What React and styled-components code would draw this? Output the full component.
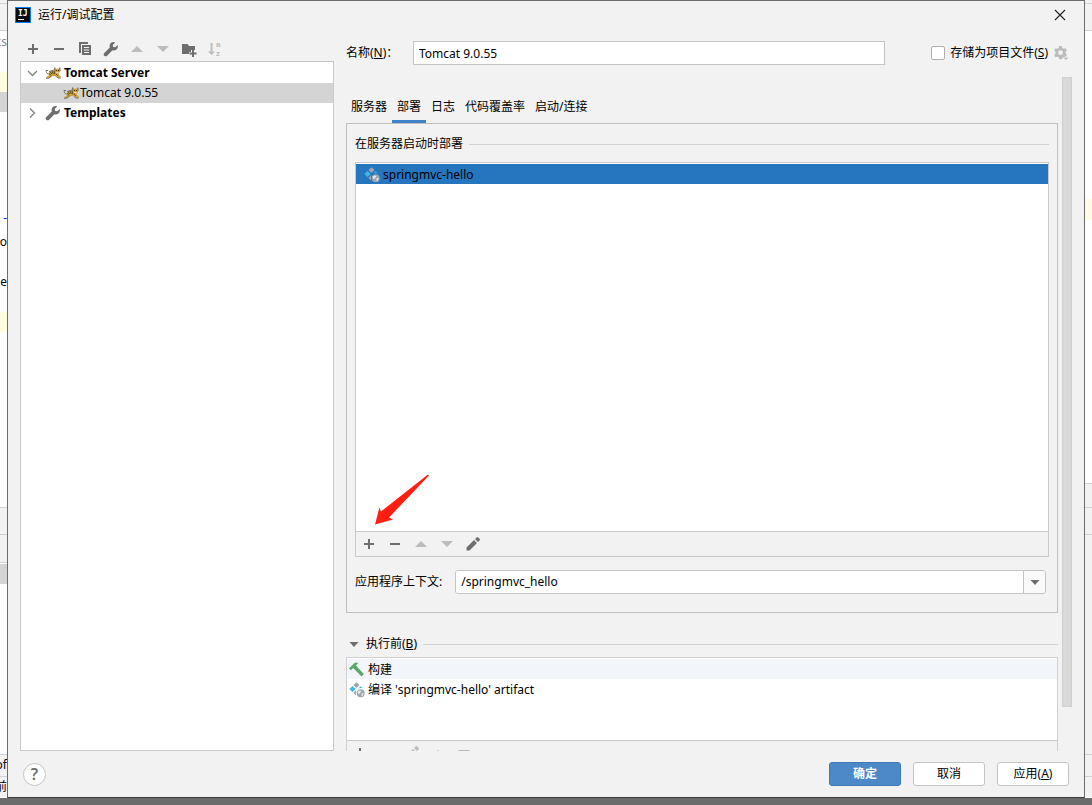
import React, { useId, useState } from 'react';
import styled, { createGlobalStyle, css } from 'styled-components';

const GlobalStyle = createGlobalStyle`
  * {
    box-sizing: border-box;
  }
  body {
    margin: 0;
    background: #6b6b6b;
    color: #000;
    font-family: 'Noto Sans', 'Noto Sans CJK SC', sans-serif;
    font-size: 12px;
    line-height: 20px;
  }
  button,
  input {
    font: inherit;
    color: inherit;
  }
  button {
    padding: 0;
    border: 0;
    background: none;
  }
`;

/* ---------- icons ---------- */

const Icon = ({ children, size = 16, color = '#6e6e6e' }) => (
  <svg width={size} height={size} viewBox="0 0 16 16" fill={color} aria-hidden="true">
    {children}
  </svg>
);

const PlusIcon = () => (
  <Icon>
    <path d="M7 3h2v4h4v2H9v4H7V9H3V7h4z" />
  </Icon>
);

const MinusIcon = () => (
  <Icon>
    <path d="M3 7h10v2H3z" />
  </Icon>
);

const CopyIcon = () => (
  <Icon>
    <path d="M2 1h9v2H4v9H2z" />
    <path fillRule="evenodd" d="M5 4h9v10H5zM7 6v1h5V6zM7 8.500v1h5v-1zM7 11v1h5v-1z" />
  </Icon>
);

const WrenchIcon = () => (
  <Icon>
    <path d="M14.700 4l-2.500 2.300-2-.4-.5-2L12.100 1.400C10 .6 7.800 1.500 7 3.300c-.5 1.200-.5 2.200-.2 3.200L1.300 12c-.8.8-.8 2 0 2.800.8.7 2 .7 2.800 0l5.400-5.500c1.300.5 2.900.2 4-.9 1.200-1.100 1.700-2.900 1.200-4.400z" />
  </Icon>
);

const UpIcon = () => (
  <Icon color="#bcbcbc">
    <path d="M2 11l6-6 6 6z" />
  </Icon>
);

const DownIcon = () => (
  <Icon color="#bcbcbc">
    <path d="M2 5h12l-6 6z" />
  </Icon>
);

const FolderPlusIcon = () => (
  <Icon>
    <path d="M1 3h5.500l1.500 2h6v4h-4v2H8v2H1z" />
    <path d="M11 9h2v2.500h2.500v2H13V16h-2v-2.500H8.500v-2H11z" />
  </Icon>
);

const SortIcon = () => (
  <Icon color="#bcbcbc">
    <path d="M3.500 2h2v8.500H8L4.500 14 1 10.500h2.500z" />
    <g fontFamily="Liberation Sans" fontSize="8" fontWeight="700">
      <text x="9" y="6">a</text>
      <text x="9" y="15">z</text>
    </g>
  </Icon>
);

const PencilIcon = ({ color }) => (
  <Icon color={color}>
    <path d="M1.500 14.500v-3L9 4l3 3-7.500 7.500zM10 3l1.600-1.600q.8-.8 1.600 0l1.400 1.400q.8.8 0 1.600L13 6z" />
  </Icon>
);

const ChevronIcon = ({ open }) => (
  <Icon>
    <path
      d={open ? 'M4 6l4.500 4.500L13 6' : 'M6 3.500L10.500 8 6 12.500'}
      fill="none"
      stroke="#808080"
      strokeWidth="1.300"
    />
  </Icon>
);

const TomcatIcon = () => (
  <Icon>
    <path d="M3.500 8q1.500-2.500 6-2.500l.2-3.200 1.600 1.400h2L15 2.300l.3 4.200-1.800 2 .5 1.500 1.800 1.500v1.300h-2.600l-2-2-3.200.2-2.200 1.300L3.500 13H1.200l.3-1.300 2.200-1z" fill="#cf9f35" />
    <path d="M10.500 7h3.500l-1.500 1.500z" fill="#f4e3b0" />
    <path d="M5 6.500L6.800 9M7 6l1.400 3M9 6l.8 3.200M11 9l1.800 1.500M4.500 8.500l1.200 2" stroke="#5c4a22" strokeWidth="1" />
    <path d="M3.500 9Q2 9 1.500 7.500T1 5.500H3M1 13.300h2.800l2.500-2.300M10.500 11l2.700 2.100h2.400M9.600 2.500v3.200M15 2.500v3.400M4 6.500L9 5" fill="none" stroke="#5e5b52" strokeWidth=".8" />
    <path d="M10.800 5h1.100v1.100h-1.100zM13 5h1.100v1.100H13z" fill="#3f3320" />
  </Icon>
);

const ArtifactIcon = () => (
  <Icon>
    <path d="M7.500.2l3 2.900-3 2.900-3-2.900z" fill="#9aa7b0" />
    <path d="M3.500 4l3.200 3-3.200 3L.4 7z" fill="#40b6e0" />
    <path d="M11.500 4.300l2.200 1.900q-3.400-.4-5.200 1.200z" fill="#40b6e0" />
    <path d="M7 8.300l.4.400q-1 2.200-.4 4.800l-2.700-2.600z" fill="#9aa7b0" />
    <circle cx="11.700" cy="11.300" r="4" fill="#9aa7b0" />
    <path d="M8.700 9.600l1.800-1.200 1.300.3.3 1.200-1.400.9-.2 1.500-1.600-1.100zM12.600 11.300l2-.3-.6 2.300-1.400 1z" fill="#e8edf1" />
  </Icon>
);

const HammerIcon = () => (
  <Icon>
    <path d="M0 6.500L5.200 1.200q2-1.200 4-.2L7 3.200l.8 1.300 7 7.500-2.300 2.400-7.300-7.500-1.200-.8L2 8.300z" fill="#59a869" />
  </Icon>
);

const GearIcon = () => (
  <Icon color="#bcbcbc">
    <path
      fillRule="evenodd"
      d="M6.200 1h2.600l.5 2 1.300.8 2-.6 1.300 2.200L12.500 7v1.200l1.400 1.500-1.200 2h-1.500l-1.600.7-.6 1.900H6.300l-.6-2-1.300-.7-2 .6-1.300-2.200 1.500-1.500V7L1.100 5.400l1.300-2.200 2 .6L5.700 3zM7.500 5.300a2.400 2.400 0 1 0 .01 4.800a2.400 2.400 0 1 0 0-4.800z"
    />
    <path d="M10 12.500h5.500L12.800 15z" />
  </Icon>
);

const IdeaLogo = () => (
  <Icon color="#fff">
    <path fill="#087cfa" d="M0 0h16v16H0z" />
    <path fill="#0b0b12" d="M1 1h14v14H1z" />
    <text x="3" y="9" fontSize="8" fontWeight="700" fontFamily="DejaVu Sans Mono">IJ</text>
    <path d="M3 12h6v1H3z" />
  </Icon>
);

const CaretIcon = () => (
  <Icon>
    <path d="M3.500 6h9L8 11z" />
  </Icon>
);

const CloseIcon = () => (
  <Icon>
    <path d="M3 3l10 10M13 3L3 13" stroke="#222" strokeWidth="1.100" />
  </Icon>
);

/* ---------- data ---------- */

const tabs = ['服务器', '部署', '日志', '代码覆盖率', '启动/连接'];

// slices of the editor that stay visible beside the dialog
const leftSlices = [
  { h: 4, bg: '#f2f2f2', line: true },
  { h: 27, bg: '#f2f2f2', line: true },
  { h: 1 },
  { h: 20, text: 'ks', color: '#888' },
  { h: 20 },
  { h: 20, bg: '#ffffe0' },
  { h: 20, bg: '#d4d4d4' },
  { h: 96 },
  { h: 20, text: '-', color: '#0033b3' },
  { h: 4 },
  { h: 20, text: 'Co' },
  { h: 20 },
  { h: 20, text: 'le' },
  { h: 20 },
  { h: 20, bg: '#ffffe0' },
  { h: 176, line: true },
  { h: 27, bg: '#f2f2f2', line: true },
  { h: 28, bg: '#f2f2f2', line: true },
  { h: 1 },
  { h: 20, bg: '#d4d4d4' },
  { h: 171, line: true },
  { h: 22, bg: '#f2f2f2', line: true, text: 'of' },
  { h: 20, bg: '#f2f2f2', text: '前' },
];

const rightSlices = [
  { h: 4, bg: '#f2f2f2', line: true },
  { h: 27, bg: '#f2f2f2', line: true },
  { h: 168 },
  { h: 21, bg: '#fffbe8' },
  { h: 264, line: true },
  { h: 24, bg: '#f2f2f2', line: true },
  { h: 27, bg: '#f2f2f2', line: true },
  { h: 220, bg: '#f2f2f2', line: true },
  { h: 22, bg: '#f2f2f2', line: true },
  { h: 20, bg: '#f2f2f2' },
];

const EditorEdge = ({ slices }) => (
  <Edge>
    {slices.map((s, i) => (
      <Slice key={i} $h={s.h} $bg={s.bg} $line={s.line} $color={s.color}>
        {s.text && <span>{s.text}</span>}
      </Slice>
    ))}
  </Edge>
);

const App = () => {
  const nameId = useId();
  const storeId = useId();
  const contextId = useId();
  const [activeTab, setActiveTab] = useState('部署');

  return (
    <>
      <GlobalStyle />
      <Screen>
        <EditorEdge slices={leftSlices} />
        <Dialog>
          <TitleBar>
            <IdeaLogo />
            <Title>运行/调试配置</Title>
            <IconButton aria-label="关闭">
              <CloseIcon />
            </IconButton>
          </TitleBar>

          <Body>
            <Sidebar>
              <Toolbar>
                <IconButton aria-label="添加"><PlusIcon /></IconButton>
                <IconButton aria-label="移除"><MinusIcon /></IconButton>
                <IconButton aria-label="复制"><CopyIcon /></IconButton>
                <IconButton aria-label="编辑模板"><WrenchIcon /></IconButton>
                <IconButton aria-label="上移"><UpIcon /></IconButton>
                <IconButton aria-label="下移"><DownIcon /></IconButton>
                <IconButton aria-label="新建文件夹"><FolderPlusIcon /></IconButton>
                <IconButton aria-label="排序"><SortIcon /></IconButton>
              </Toolbar>
              <Tree>
                <TreeRow $bold>
                  <ChevronIcon open />
                  <TreeLabel><TomcatIcon />Tomcat Server</TreeLabel>
                </TreeRow>
                <TreeRow $selected $nested>
                  <TreeLabel $tight><TomcatIcon />Tomcat 9.0.55</TreeLabel>
                </TreeRow>
                <TreeRow $bold>
                  <ChevronIcon />
                  <TreeLabel><WrenchIcon />Templates</TreeLabel>
                </TreeRow>
              </Tree>
            </Sidebar>

            <Main>
              <NameRow>
                <NameLabel htmlFor={nameId}>名称(<u>N</u>)：</NameLabel>
                <NameInput id={nameId} defaultValue="Tomcat 9.0.55" />
                <StoreOption>
                  <CheckBox type="checkbox" id={storeId} />
                  <label htmlFor={storeId}>存储为项目文件(<u>S</u>)</label>
                  <IconButton aria-label="存储选项"><GearIcon /></IconButton>
                </StoreOption>
              </NameRow>

              <ScrollArea>
                <Content>
                  <TabBar role="tablist">
                    {tabs.map((tab) => (
                      <Tab
                        key={tab}
                        role="tab"
                        aria-selected={tab === activeTab}
                        $active={tab === activeTab}
                        onClick={() => setActiveTab(tab)}
                      >
                        {tab}
                      </Tab>
                    ))}
                  </TabBar>

                  <TabPanel>
                    <SectionTitle>在服务器启动时部署</SectionTitle>
                    <DeployBox>
                      <DeployList>
                        <DeployItem>
                          <ArtifactIcon />
                          springmvc-hello
                        </DeployItem>
                      </DeployList>
                      <ListToolbar>
                        <IconButton aria-label="添加"><PlusIcon /></IconButton>
                        <IconButton aria-label="移除"><MinusIcon /></IconButton>
                        <IconButton aria-label="上移"><UpIcon /></IconButton>
                        <IconButton aria-label="下移"><DownIcon /></IconButton>
                        <IconButton aria-label="编辑"><PencilIcon /></IconButton>
                      </ListToolbar>
                      <Pointer width="54" height="52" viewBox="0 0 54 52" aria-hidden="true">
                        <path d="M53 .5l1 1L14 43.500 18 45.500 0 50.500 4.500 33.500l1.500 4z" fill="#ff1e10" />
                      </Pointer>
                    </DeployBox>
                    <ContextRow>
                      <label htmlFor={contextId}>应用程序上下文:</label>
                      <Combo>
                        <input id={contextId} defaultValue="/springmvc_hello" />
                        <button aria-label="展开"><CaretIcon /></button>
                      </Combo>
                    </ContextRow>
                  </TabPanel>

                  <BeforeTitle>
                    <CaretIcon />
                    <SectionTitle>
                      <span>执行前(<u>B</u>)</span>
                    </SectionTitle>
                  </BeforeTitle>
                  <TaskBox>
                    <TaskList>
                      <Task $striped><HammerIcon />构建</Task>
                      <Task><ArtifactIcon />编译 'springmvc-hello' artifact</Task>
                    </TaskList>
                    <ListToolbar>
                      <IconButton aria-label="添加任务"><PlusIcon /></IconButton>
                      <IconButton aria-label="移除任务"><MinusIcon /></IconButton>
                      <IconButton aria-label="编辑任务"><PencilIcon color="#bcbcbc" /></IconButton>
                      <IconButton aria-label="任务上移"><UpIcon /></IconButton>
                      <IconButton aria-label="任务下移"><DownIcon /></IconButton>
                    </ListToolbar>
                  </TaskBox>
                </Content>
                <ScrollTrack>
                  <ScrollThumb />
                </ScrollTrack>
              </ScrollArea>
            </Main>
          </Body>

          <Footer>
            <HelpButton aria-label="帮助">?</HelpButton>
            <Actions>
              <Button $primary>确定</Button>
              <Button>取消</Button>
              <Button><span>应用(<u>A</u>)</span></Button>
            </Actions>
          </Footer>
        </Dialog>
        <EditorEdge slices={rightSlices} />
      </Screen>
    </>
  );
};

/* ---------- styles ---------- */

const Screen = styled.div`
  display: grid;
  grid-template-columns: 7px 1fr 7px;
  height: 100vh;
  padding-bottom: 7px;
`;

const Edge = styled.div`
  display: flex;
  flex-direction: column;
  overflow: hidden;
  background: #fff;
`;

const Slice = styled.div`
  display: flex;
  flex: none;
  justify-content: flex-end;
  height: ${({ $h }) => $h}px;
  background: ${({ $bg }) => $bg || '#fff'};
  border-bottom: ${({ $line }) => ($line ? '1px solid #d1d1d1' : 'none')};
  color: ${({ $color }) => $color || '#000'};
`;

const Dialog = styled.div`
  display: flex;
  flex-direction: column;
  min-width: 0;
  min-height: 0;
  background: #f2f2f2;
  border: 1px solid #6b6b6b;
  border-bottom-color: #3c3c3c;
`;

const IconButton = styled.button`
  display: flex;
  flex: none;
`;

const TitleBar = styled.div`
  display: flex;
  align-items: center;
  gap: 7px;
  height: 28px;
  padding: 0 16px 0 7px;
`;

const Title = styled.div`
  flex: 1;
`;

const Body = styled.div`
  display: flex;
  flex: 1;
  gap: 12px;
  min-height: 0;
  padding: 0 12px;
`;

const Sidebar = styled.div`
  display: flex;
  flex-direction: column;
  width: 314px;
  padding-top: 8px;
`;

const Toolbar = styled.div`
  display: flex;
  align-items: center;
  gap: 10px;
  height: 24px;
  padding-left: 5px;
`;

const Tree = styled.div`
  flex: 1;
  padding-top: 1px;
  border: 1px solid #c9c9c9;
  background: #fff;
`;

const TreeRow = styled.div`
  display: flex;
  align-items: center;
  gap: 5px;
  height: 20px;
  padding-left: ${({ $nested }) => ($nested ? 42 : 3)}px;
  font-weight: ${({ $bold }) => ($bold ? 700 : 400)};
  background: ${({ $selected }) => ($selected ? '#d4d4d4' : 'transparent')};
`;

const TreeLabel = styled.span`
  display: flex;
  align-items: center;
  gap: ${({ $tight }) => ($tight ? 1 : 3)}px;
`;

const Main = styled.div`
  display: flex;
  flex: 1;
  flex-direction: column;
  min-width: 0;
`;

const NameRow = styled.div`
  display: flex;
  align-items: center;
  height: 48px;
`;

const NameLabel = styled.label`
  width: 67px;
  white-space: nowrap;
`;

const NameInput = styled.input`
  flex: 1;
  min-width: 0;
  height: 24px;
  padding: 0 5px;
  border: 1px solid #c4c4c4;
  background: #fff;
`;

const StoreOption = styled.div`
  display: flex;
  align-items: center;
  gap: 5px;
  padding: 0 3px 0 46px;
`;

const CheckBox = styled.input`
  appearance: none;
  width: 14px;
  height: 14px;
  margin: 0;
  border: 1px solid #b0b0b0;
  border-radius: 2px;
  background: #fff;
`;

const ScrollArea = styled.div`
  display: flex;
  flex: 1;
  gap: 4px;
  min-height: 0;
  overflow: hidden;
`;

const Content = styled.div`
  flex: 1;
  min-width: 0;
`;

const TabBar = styled.div`
  display: flex;
  height: 46px;
  padding-top: 16px;
`;

const Tab = styled.button`
  padding: 0 5px;
  border-bottom: 3px solid ${({ $active }) => ($active ? '#4083c9' : 'transparent')};
  white-space: nowrap;
`;

const TabPanel = styled.div`
  height: 490px;
  padding: 10px 8px;
  border: 1px solid #bfbfbf;
`;

const SectionTitle = styled.div`
  display: flex;
  flex: 1;
  align-items: center;
  gap: 6px;
  &::after {
    content: '';
    flex: 1;
    height: 1px;
    background: #d1d1d1;
  }
`;

const DeployBox = styled.div`
  position: relative;
  margin-top: 8px;
  border: 1px solid #c9c9c9;
`;

const DeployList = styled.div`
  height: 368px;
  padding-top: 1px;
  background: #fff;
`;

const DeployItem = styled.div`
  display: flex;
  align-items: center;
  gap: 3px;
  height: 20px;
  padding: 1px 0 0 8px;
  background: #2675bf;
`;

const ListToolbar = styled.div`
  display: flex;
  align-items: center;
  gap: 10px;
  height: 25px;
  padding-left: 5px;
  border-top: 1px solid #c9c9c9;
`;

// red callout arrow over the deployment list
const Pointer = styled.svg`
  position: absolute;
  left: 19px;
  bottom: 30px;
`;

const ContextRow = styled.div`
  display: flex;
  align-items: center;
  gap: 13px;
  margin-top: 13px;
  padding-right: 3px;
`;

const Combo = styled.div`
  display: flex;
  flex: 1;
  height: 24px;
  overflow: hidden;
  border: 1px solid #c4c4c4;
  border-radius: 3px;
  input {
    flex: 1;
    min-width: 0;
    padding: 0 5px;
    border: 0;
    background: #fff;
  }
  button {
    display: flex;
    align-items: center;
    justify-content: center;
    width: 22px;
    border-left: 1px solid #c4c4c4;
    background: #fafafa;
  }
`;

const BeforeTitle = styled.div`
  display: flex;
  align-items: center;
  gap: 4px;
  margin-top: 21px;
`;

const TaskBox = styled.div`
  margin-top: 3px;
  border: 1px solid #d1d1d1;
`;

const TaskList = styled.div`
  height: 82px;
  padding-top: 1px;
  background: #fff;
`;

const Task = styled.div`
  display: flex;
  align-items: center;
  gap: 3px;
  height: 20px;
  padding: 1px 0 0 2px;
  ${({ $striped }) =>
    $striped &&
    css`
      background: #f2f5f9;
    `}
`;

const ScrollTrack = styled.div`
  width: 10px;
`;

const ScrollThumb = styled.div`
  height: 630px;
  border: 1px solid #d0d0d0;
  background: #d9d9d9;
`;

const Footer = styled.div`
  display: flex;
  align-items: center;
  justify-content: space-between;
  height: 46px;
  padding: 0 15px;
`;

const HelpButton = styled.button`
  width: 23px;
  height: 23px;
  border: 1px solid #c4c4c4;
  border-radius: 50%;
  background: #fff;
  color: #6e6e6e;
  font-size: 16px;
  font-weight: 600;
`;

const Actions = styled.div`
  display: flex;
  gap: 12px;
`;

const Button = styled.button`
  width: 72px;
  height: 24px;
  border: 1px solid ${({ $primary }) => ($primary ? '#4079b8' : '#c4c4c4')};
  border-radius: 3px;
  background: ${({ $primary }) => ($primary ? '#4d89c9' : '#fff')};
  color: ${({ $primary }) => ($primary ? '#fff' : '#000')};
  font-weight: ${({ $primary }) => ($primary ? 700 : 400)};
`;

export default App;
